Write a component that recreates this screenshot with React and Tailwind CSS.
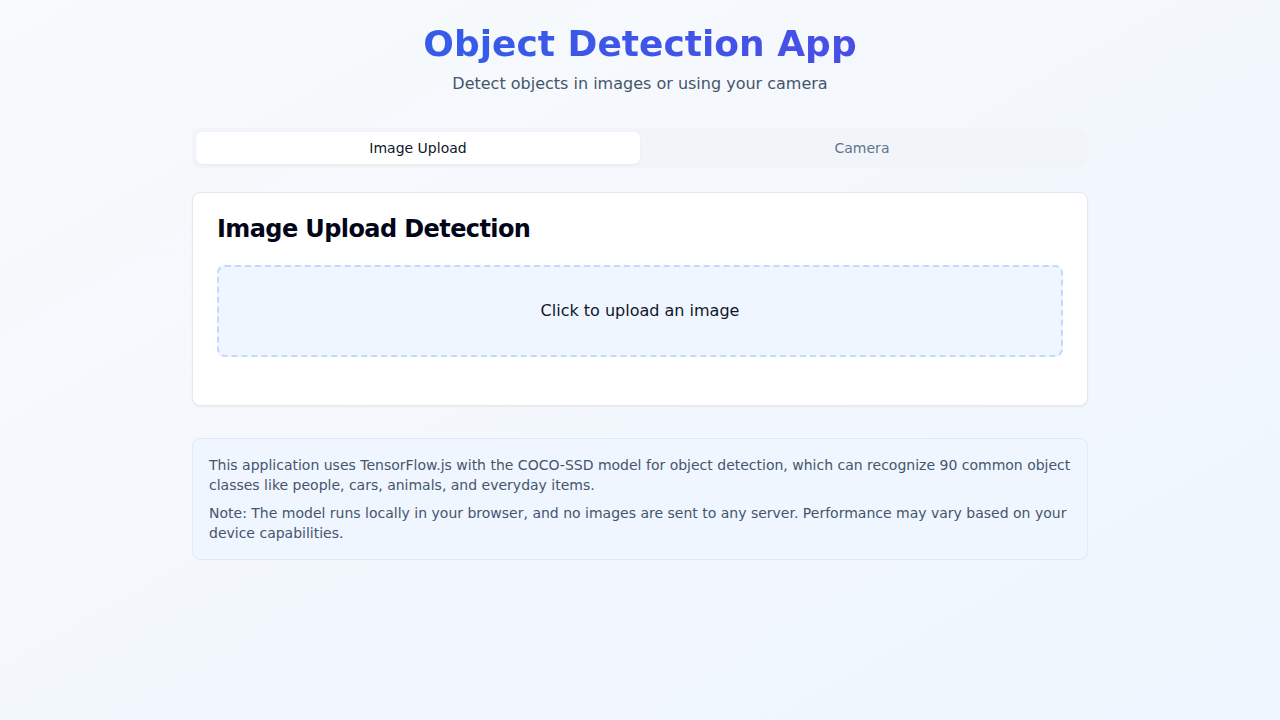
import { useState } from 'react';

export default function App() {
  const [tab, setTab] = useState('upload');

  return (
    <div className="min-h-screen bg-gradient-to-br from-slate-50 to-blue-50 font-['DejaVu_Sans',sans-serif]">
      <div className="max-w-4xl mx-auto py-6">
        {/* Cabecera */}
        <div className="text-center mb-8">
          <h1 className="text-4xl font-bold bg-gradient-to-r from-[#2563eb] to-[#4f46e5] bg-clip-text text-transparent">
            Object Detection App
          </h1>
          <p className="mt-2 text-base text-slate-600">Detect objects in images or using your camera</p>
        </div>

        {/* Pestañas */}
        <div className="grid grid-cols-2 h-10 p-1 rounded-lg bg-slate-100">
          <button
            onClick={() => setTab('upload')}
            className={`rounded-md text-sm ${tab === 'upload' ? 'bg-white text-slate-900 shadow-xs' : 'text-slate-500'}`}
          >
            Image Upload
          </button>
          <button
            onClick={() => setTab('camera')}
            className={`rounded-md text-sm ${tab === 'camera' ? 'bg-white text-slate-900 shadow-xs' : 'text-slate-500'}`}
          >
            Camera
          </button>
        </div>

        {/* Tarjeta principal */}
        <div className="mt-6 bg-white border border-slate-200 rounded-lg shadow-xs">
          <div className="p-6">
            <h2 className="text-2xl font-bold leading-none tracking-tight text-slate-950">
              {tab === 'upload' ? 'Image Upload Detection' : 'Camera Detection'}
            </h2>
          </div>
          <div className="px-6 pb-12">
            <label className="block border-2 border-dashed border-blue-200 bg-blue-50 rounded-lg p-8 text-center cursor-pointer">
              <span className="text-base text-slate-900">Click to upload an image</span>
              <input type="file" accept="image/*" className="hidden" />
            </label>
          </div>
        </div>

        {/* Nota informativa */}
        <div className="mt-8 bg-blue-50 border border-blue-100 rounded-lg p-4 text-sm text-slate-600">
          <p>
            This application uses TensorFlow.js with the COCO-SSD model for object detection, which can recognize 90 common object classes like people, cars, animals, and everyday items.
          </p>
          <p className="mt-2">
            Note: The model runs locally in your browser, and no images are sent to any server. Performance may vary based on your device capabilities.
          </p>
        </div>
      </div>
    </div>
  );
}
